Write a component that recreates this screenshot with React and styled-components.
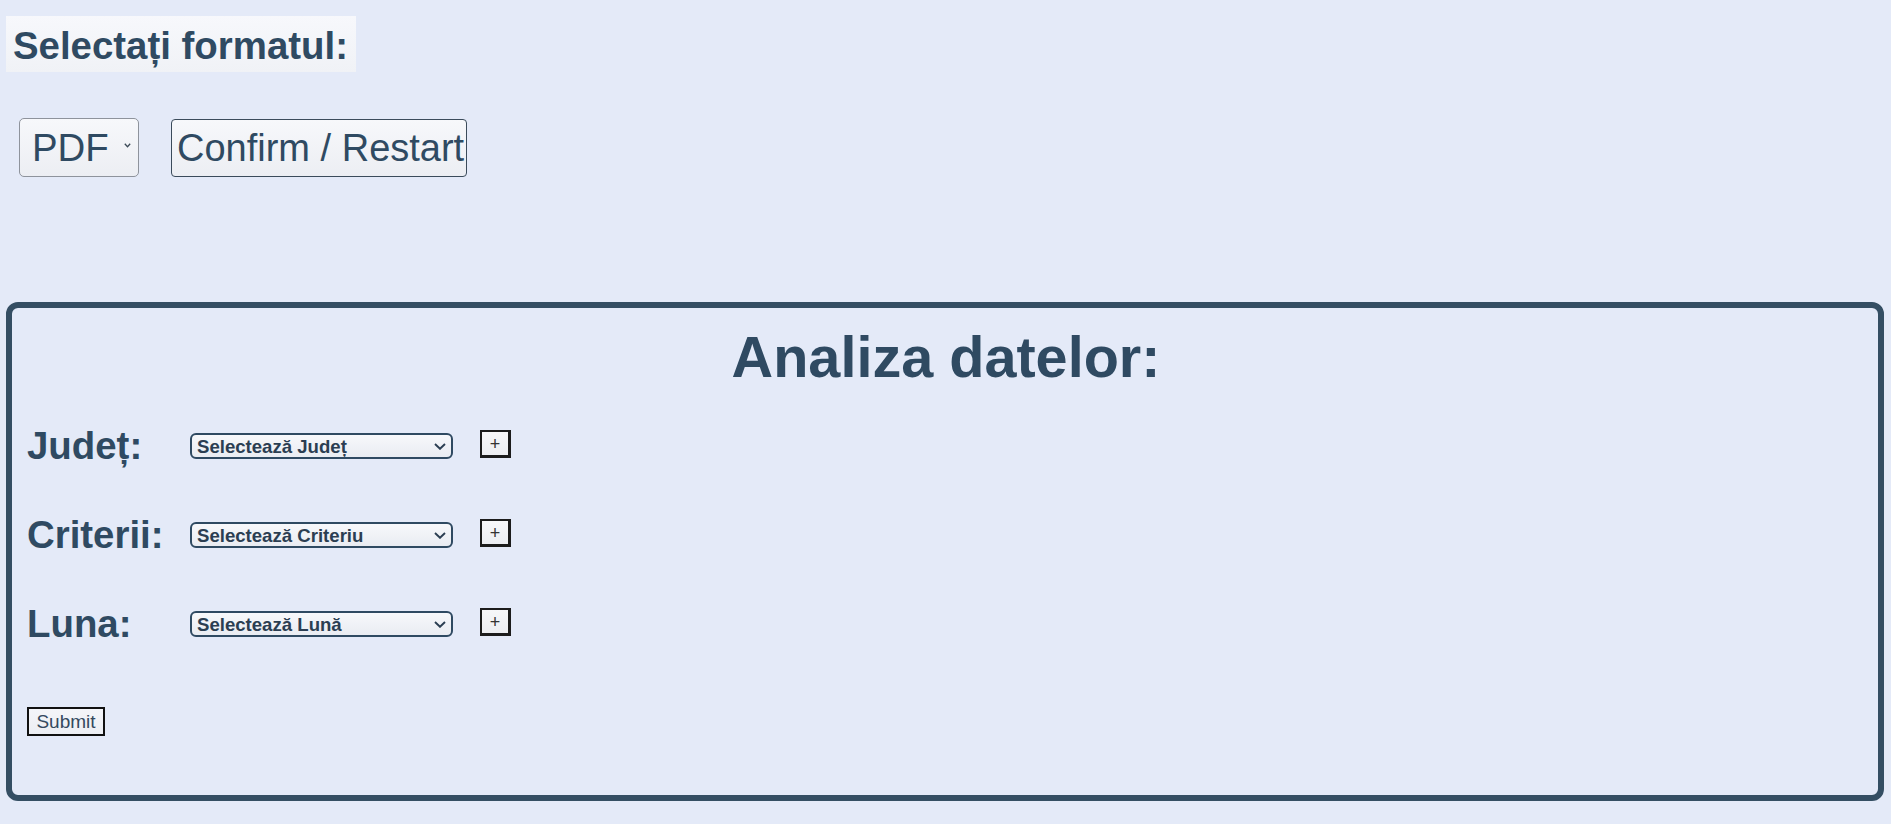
import React from "react";
import styled, { createGlobalStyle } from "styled-components";

const GlobalStyle = createGlobalStyle`
  html, body {
    margin: 0;
    padding: 0;
    background: #e4eaf8;
  }
  body {
    font-family: "Liberation Sans", Arial, sans-serif;
    color: #2f4a62;
  }
  * { box-sizing: border-box; }
`;

const Page = styled.div`
  display: flex;
  flex-direction: column;
  padding: 16px 7px 24px 6px;
`;

const FormatTitle = styled.h2`
  align-self: flex-start;
  margin: 0;
  padding: 8px 8px 4px 7px;
  font-size: 38.4px;
  line-height: 44px;
  font-weight: 700;
  color: #2f4a62;
  background: linear-gradient(180deg, #f7f8fc 0%, #f0f2f6 100%);
`;

const ControlsRow = styled.div`
  display: flex;
  align-items: flex-start;
  gap: 32px;
  margin-top: 46px;
  padding-left: 13px;
`;

const SelectWrap = styled.div`
  position: relative;
  display: inline-flex;
  flex: none;
`;

const FormatSelect = styled.select`
  appearance: none;
  -webkit-appearance: none;
  width: 120px;
  height: 59px;
  padding: 0 0 0 12px;
  border: 1px solid #8e939c;
  border-radius: 5px;
  background: linear-gradient(180deg, #f7f8fb 0%, #eceef3 100%);
  font-family: "Liberation Sans", Arial, sans-serif;
  font-size: 38.4px;
  color: #2f4a62;
  outline: none;
`;

const Chevron = styled.svg`
  position: absolute;
  right: ${(p) => p.$right}px;
  top: ${(p) => p.$top}px;
  pointer-events: none;
`;

const ConfirmButton = styled.button`
  height: 58px;
  margin-top: 1px;
  padding: 0 2px 0 5px;
  border: 1px solid #3b4b5b;
  border-radius: 4px;
  background: linear-gradient(180deg, #f7f8fb 0%, #eceef3 100%);
  font-family: "Liberation Sans", Arial, sans-serif;
  font-size: 38px;
  color: #2f4a62;
  white-space: nowrap;
  overflow: hidden;
`;

const AnalysisBox = styled.section`
  display: flex;
  flex-direction: column;
  margin-top: 125px;
  border: 6px solid #344e63;
  border-radius: 12px;
  padding: 16px 13px 59px 15px;
`;

const AnalysisTitle = styled.h1`
  margin: 0;
  text-align: center;
  font-size: 57.6px;
  line-height: 66px;
  font-weight: 700;
  color: #2f4a62;
`;

const Rows = styled.div`
  display: flex;
  flex-direction: column;
  gap: 45px;
  margin-top: 34px;
`;

const FieldRow = styled.div`
  display: flex;
  align-items: center;
  height: 44px;
`;

const FieldLabel = styled.label`
  width: 163px;
  flex: none;
  font-size: 38.4px;
  line-height: 44px;
  font-weight: 700;
  color: #2f4a62;
`;

const FieldSelect = styled.select`
  appearance: none;
  -webkit-appearance: none;
  width: 263px;
  height: 26px;
  padding: 0 0 0 5px;
  border: 2px solid #2f4a62;
  border-radius: 6px;
  background: linear-gradient(180deg, #f7f8fb 0%, #e9ecf2 100%);
  font-family: "Liberation Sans", Arial, sans-serif;
  font-size: 18.6px;
  font-weight: 700;
  color: #2b3e52;
  outline: none;
`;

const PlusButton = styled.button`
  align-self: flex-start;
  margin: 6px 0 0 27px;
  width: 31px;
  height: 28px;
  padding: 0;
  border-style: solid;
  border-color: #1c1c1c;
  border-width: 2px 3px 3px 2px;
  background: linear-gradient(180deg, #f7f7f9 0%, #eceef2 100%);
  font-family: "Liberation Sans", Arial, sans-serif;
  font-size: 18px;
  line-height: 1;
  color: #333;
`;

const SubmitButton = styled.button`
  align-self: flex-start;
  margin-top: 61px;
  width: 78px;
  height: 29px;
  padding: 0;
  border: 2px solid #111;
  background: linear-gradient(180deg, #f4f5f9 0%, #eceef3 100%);
  font-family: "Liberation Sans", Arial, sans-serif;
  font-size: 19px;
  color: #34495e;
`;

const fields = [
  { label: "Județ:", placeholder: "Selectează Județ" },
  { label: "Criterii:", placeholder: "Selectează Criteriu" },
  { label: "Luna:", placeholder: "Selectează Lună" },
];

export default function App() {
  return (
    <>
      <GlobalStyle />
      <Page>
        <FormatTitle>Selectați formatul:</FormatTitle>
        <ControlsRow>
          <SelectWrap>
            <FormatSelect defaultValue="pdf">
              <option value="pdf">PDF</option>
              <option value="csv">CSV</option>
            </FormatSelect>
            <Chevron $right={8} $top={25} width="7" height="5" viewBox="0 0 7 5">
              <polyline points="0.8,0.8 3.5,3.8 6.2,0.8" fill="none" stroke="#3c4a58" strokeWidth="1.3" />
            </Chevron>
          </SelectWrap>
          <ConfirmButton>Confirm / Restart</ConfirmButton>
        </ControlsRow>

        <AnalysisBox>
          <AnalysisTitle>Analiza datelor:</AnalysisTitle>
          <Rows>
            {fields.map((f) => (
              <FieldRow key={f.label}>
                <FieldLabel>{f.label}</FieldLabel>
                <SelectWrap>
                  <FieldSelect defaultValue="">
                    <option value="">{f.placeholder}</option>
                  </FieldSelect>
                  <Chevron $right={7} $top={10} width="12" height="7" viewBox="0 0 12 7">
                    <polyline points="1,1 6,5.8 11,1" fill="none" stroke="#2b3e52" strokeWidth="1.9" />
                  </Chevron>
                </SelectWrap>
                <PlusButton type="button">+</PlusButton>
              </FieldRow>
            ))}
          </Rows>
          <SubmitButton type="button">Submit</SubmitButton>
        </AnalysisBox>
      </Page>
    </>
  );
}
